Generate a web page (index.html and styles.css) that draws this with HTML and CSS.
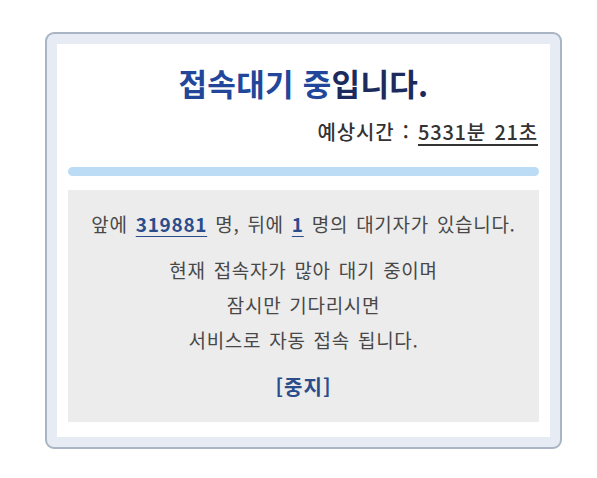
FILE: index.html
```html
<!DOCTYPE html>
<html lang="ko">
<head>
    <meta charset="UTF-8">
    <meta name="viewport" content="width=device-width, initial-scale=1.0">
    <title>접속대기</title>
    <link rel="stylesheet" href="styles.css">
</head>
<body>
    <div class="queue-box">
        <div class="queue-inner">
            <h1 class="queue-title">접속대기 중<span class="dark">입니다.</span></h1>
            <p class="queue-time">예상시간 : <u>5331분 21초</u></p>
            <div class="queue-bar"></div>
            <div class="queue-info">
                <p class="queue-count">앞에 <a href="#">319881</a> 명, 뒤에 <a href="#">1</a> 명의 대기자가 있습니다.</p>
                <p class="queue-msg">현재 접속자가 많아 대기 중이며<br>잠시만 기다리시면<br>서비스로 자동 접속 됩니다.</p>
                <a class="queue-stop" href="#">[중지]</a>
            </div>
        </div>
    </div>
</body>
</html>
```

FILE: styles.css
```css
body {
    margin: 0;
    background-color: #fff;
    font-family: "Noto Sans CJK KR", "Noto Sans", sans-serif;
    color: #484848;
}

.queue-box {
    width: 493px;
    margin: 32px 0 0 45px;
    padding: 10px;
    background-color: #e7ecf4;
    border: 2px solid #a9b4c4;
    border-radius: 9px;
}

.queue-inner {
    background-color: #fff;
    padding: 20px 11px 15px;
}

.queue-title {
    margin: 0;
    text-align: center;
    font-size: 31px;
    line-height: 38px;
    letter-spacing: 0.3px;
    font-weight: bold;
    color: #22479a;
}

.queue-title .dark {
    color: #1b2b5e;
}

.queue-time {
    margin: 16px 1px 0 0;
    text-align: right;
    font-size: 20px;
    line-height: 28px;
    letter-spacing: 0.8px;
    word-spacing: 2px;
    font-weight: 500;
    color: #333;
}

.queue-time u {
    text-underline-offset: 4px;
}

.queue-bar {
    height: 9px;
    margin-top: 21px;
    border-radius: 5px;
    background-color: #bcdcf6;
}

.queue-info {
    margin-top: 14px;
    padding: 20px 0 21px;
    background-color: #ececec;
    text-align: center;
    font-size: 19px;
    letter-spacing: 0.7px;
    word-spacing: 2px;
}

.queue-info p {
    margin: 0;
}

.queue-count {
    line-height: 28px;
}

.queue-count a {
    color: #2b4d8c;
    font-weight: bold;
    text-underline-offset: 4px;
}

.queue-msg {
    margin-top: 14px !important;
    line-height: 35px;
}

.queue-stop {
    display: inline-block;
    margin-top: 16px;
    font-size: 20px;
    line-height: 28px;
    letter-spacing: 1px;
    font-weight: bold;
    color: #2b4d8c;
    text-decoration: none;
}
```
